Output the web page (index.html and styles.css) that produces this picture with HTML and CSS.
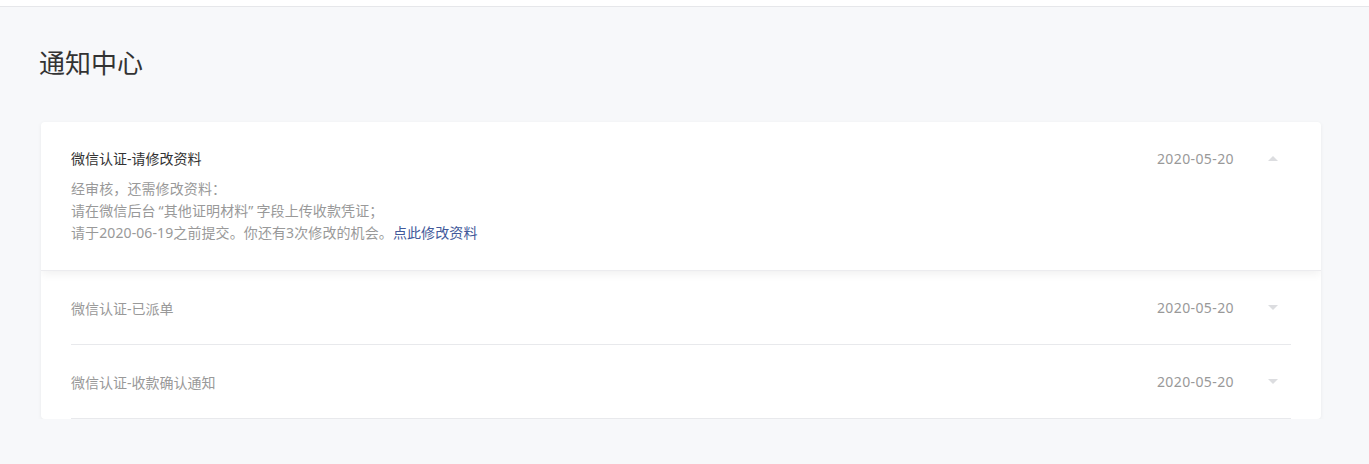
FILE: index.html
```html
<!DOCTYPE html>
<html lang="zh-CN">
<head>
<meta charset="utf-8">
<title>通知中心</title>
<link rel="stylesheet" href="styles.css">
</head>
<body>
<div class="topbar"></div>
<main class="page">
  <h1 class="page-title">通知中心</h1>
  <section class="card">
    <div class="item expanded">
      <div class="item-head">
        <span class="item-title">微信认证-请修改资料</span>
        <span class="item-date">2020-05-20</span>
        <span class="caret up"></span>
      </div>
      <div class="item-body">
        <p>经审核，还需修改资料：</p>
        <p>请在微信后台<span class="quote">“其他证明材料”</span>字段上传收款凭证；</p>
        <p>请于2020-06-19之前提交。你还有3次修改的机会。<a class="link" href="#">点此修改资料</a></p>
      </div>
    </div>
    <div class="item">
      <div class="item-head">
        <span class="item-title muted">微信认证-已派单</span>
        <span class="item-date">2020-05-20</span>
        <span class="caret down"></span>
      </div>
    </div>
    <div class="item">
      <div class="item-head">
        <span class="item-title muted">微信认证-收款确认通知</span>
        <span class="item-date">2020-05-20</span>
        <span class="caret down"></span>
      </div>
    </div>
  </section>
</main>
</body>
</html>
```

FILE: styles.css
```css
* { box-sizing: border-box; }
html, body {
  margin: 0;
  padding: 0;
  background: #f7f8fa;
  font-family: "Noto Sans", "Noto Sans CJK SC", sans-serif;
  color: #333;
}
.topbar {
  height: 7px;
  background: #fff;
  border-bottom: 1px solid #e6e7ea;
}
.page {
  padding: 0 48px 0 41px;
}
.page-title {
  margin: 0 0 0 -2px;
  padding: 36px 0 0 0;
  height: 115px;
  font-size: 26px;
  line-height: 40px;
  font-weight: 400;
  color: #333;
}
.card {
  background: #fff;
  border-radius: 4px;
  box-shadow: 0 1px 4px rgba(0, 0, 0, 0.06);
  overflow: hidden;
}
.item {
  padding: 0 30px;
}
.item-head {
  display: flex;
  align-items: center;
  height: 20px;
}
.item + .item .item-head {
  height: 74px;
  border-bottom: 1px solid #e8e9ec;
}
.item.expanded {
  padding-top: 26px;
  padding-bottom: 26px;
  position: relative;
  box-shadow: 0 2px 10px rgba(0, 0, 0, 0.07);
  border-bottom: 1px solid #ececef;
}
.item-title {
  flex: 1;
  font-size: 14px;
  color: #333;
}
.item-title.muted {
  color: #999;
}
.item-date {
  font-size: 14px;
  letter-spacing: 0.4px;
  color: #999;
  margin-right: 34px;
}
.caret {
  width: 0;
  height: 0;
  border-left: 5px solid transparent;
  border-right: 5px solid transparent;
  margin-right: 13px;
}
.caret.up {
  border-bottom: 5px solid #dcdde0;
}
.caret.down {
  border-top: 5px solid #dcdde0;
}
.item-body {
  margin-top: 10px;
  font-size: 14px;
  line-height: 22px;
  letter-spacing: 0.1px;
  color: #999;
}
.item-body p {
  margin: 0;
}
.quote {
  padding: 0 3px;
}
.link {
  color: #42599a;
  text-decoration: none;
}
```
